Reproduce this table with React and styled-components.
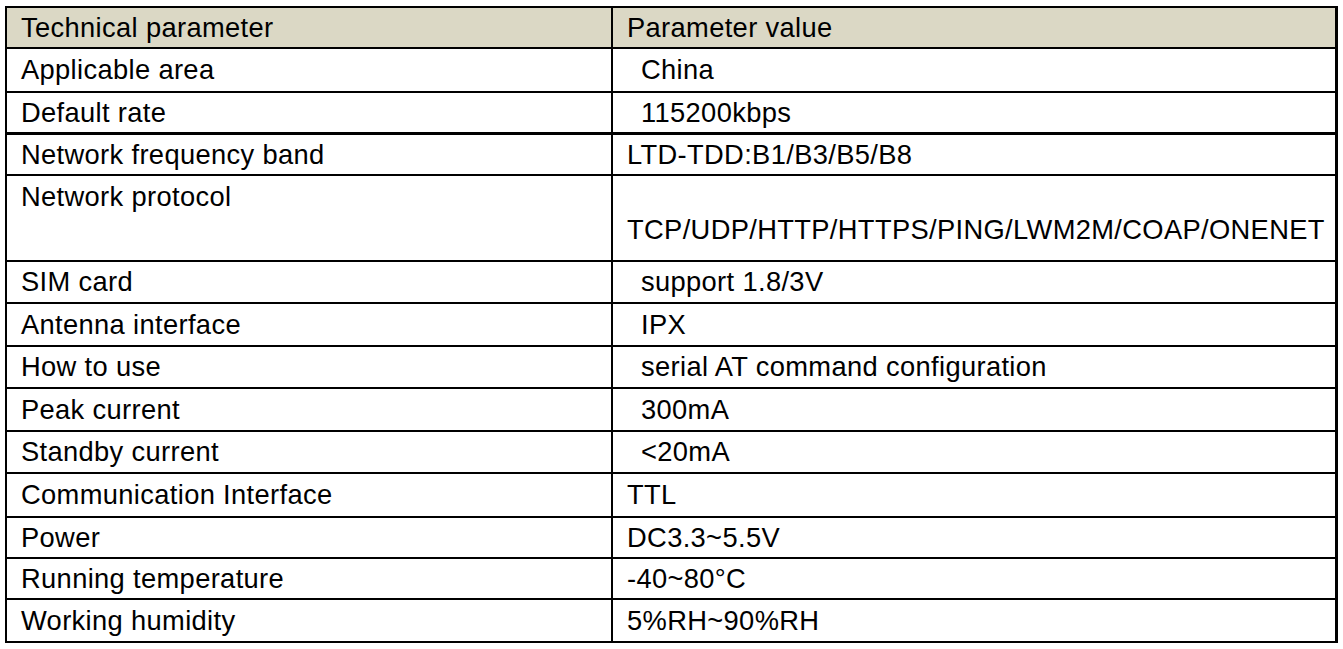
import styled, { createGlobalStyle } from "styled-components";

const GlobalStyle = createGlobalStyle`
  body {
    margin: 0;
    background: #ffffff;
    font-family: "Liberation Sans", Arial, sans-serif;
  }
`;

const Page = styled.div`
  padding: 6px 0 0 5px;
`;

const Table = styled.table`
  border-collapse: separate;
  border-spacing: 0;
  table-layout: fixed;
  width: 1333px;
  border-top: 2px solid #000;
  border-left: 2px solid #000;
  border-right: 3px solid #000;
  border-bottom: 2px solid #000;
  color: #000;
  font-size: 27.3px;
  letter-spacing: 0.35px;
`;

const Row = styled.tr`
  height: ${props => props.h}px;
  background: ${props => (props.head ? "#dbd8c5" : "#fff")};
`;

const Cell = styled.td`
  padding: 0 0 0 ${props => 14 + (props.indent ? 14 : 0)}px;
  white-space: nowrap;
  vertical-align: ${props => (props.top ? "top" : "middle")};
  border-bottom: ${props => (props.last ? 0 : props.thick ? 3 : 2)}px solid #000;
  line-height: 30px;
  &:first-child {
    border-right: 2px solid #000;
  }
`;

const TallText = styled.div`
  padding-top: 4px;
  line-height: 33px;
`;

const rows = [
  { name: "Applicable area", value: "China", indent: true, h: 44 },
  { name: "Default rate", value: "115200kbps", indent: true, h: 42, thick: true },
  { name: "Network frequency band", value: "LTD-TDD:B1/B3/B5/B8", h: 41 },
  { name: "Network protocol", value: "TCP/UDP/HTTP/HTTPS/PING/LWM2M/COAP/ONENET", h: 86, tall: true },
  { name: "SIM card", value: "support 1.8/3V", indent: true, h: 42 },
  { name: "Antenna interface", value: "IPX", indent: true, h: 43 },
  { name: "How to use", value: "serial AT command configuration", indent: true, h: 42 },
  { name: "Peak current", value: "300mA", indent: true, h: 43 },
  { name: "Standby current", value: "<20mA", indent: true, h: 42 },
  { name: "Communication Interface", value: "TTL", h: 44 },
  { name: "Power", value: "DC3.3~5.5V", h: 41 },
  { name: "Running temperature", value: "-40~80°C", h: 41 },
  { name: "Working humidity", value: "5%RH~90%RH", h: 41 },
];

export default function App() {
  return (
    <Page>
      <GlobalStyle />
      <Table>
        <colgroup>
          <col style={{ width: 606 }} />
          <col />
        </colgroup>
        <tbody>
          <Row head h={41}>
            <Cell>Technical parameter</Cell>
            <Cell>Parameter value</Cell>
          </Row>
          {rows.map((r, i) => {
            const last = i === rows.length - 1;
            if (r.tall) {
              return (
                <Row key={r.name} h={r.h}>
                  <Cell top last={last}>
                    <TallText>{r.name}</TallText>
                  </Cell>
                  <Cell top last={last}>
                    <TallText>
                      <br />
                      {r.value}
                    </TallText>
                  </Cell>
                </Row>
              );
            }
            return (
              <Row key={r.name} h={r.h}>
                <Cell last={last} thick={r.thick}>{r.name}</Cell>
                <Cell last={last} thick={r.thick} indent={r.indent}>
                  {r.value}
                </Cell>
              </Row>
            );
          })}
        </tbody>
      </Table>
    </Page>
  );
}
